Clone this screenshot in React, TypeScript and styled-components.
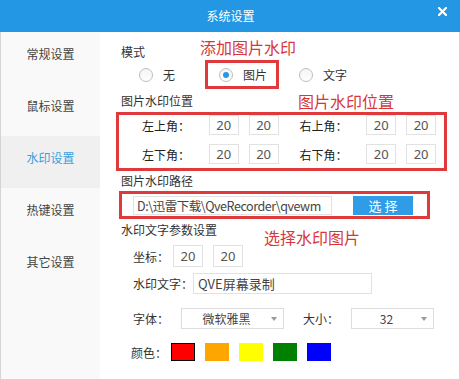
import React, { useState } from 'react';
import styled, { createGlobalStyle } from 'styled-components';

const GlobalStyle = createGlobalStyle`
  html, body {
    margin: 0;
    padding: 0;
    background: #fff;
  }
  body {
    font-family: "Noto Sans CJK SC", "Noto Sans", sans-serif;
    font-size: 12px;
    color: #333;
  }
  * {
    box-sizing: border-box;
  }
`;

const RED = '#e0393c';

const Window = styled.div`
  width: 460px;
  height: 380px;
  display: flex;
  flex-direction: column;
  background: #fff;
`;

const TitleBar = styled.div`
  height: 32px;
  flex: 0 0 32px;
  display: grid;
  grid-template-columns: 1fr auto 1fr;
  background: #2397e3;
  color: #fff;
`;

const Title = styled.div`
  grid-column: 2;
  line-height: 32px;
  font-size: 12px;
  padding-left: 1px;
`;

const CloseButton = styled.div`
  grid-column: 3;
  justify-self: end;
  align-self: start;
  width: 9px;
  height: 9px;
  margin: 7px 13px 0 0;
  display: flex;
`;

const Body = styled.div`
  flex: 1;
  display: flex;
  border: 1px solid #d4d4d4;
  border-top: none;
`;

const Sidebar = styled.div`
  width: 99px;
  flex: 0 0 99px;
  background: #f9f9f9;
  display: flex;
  flex-direction: column;
`;

const NavItem = styled.div<{ $active?: boolean }>`
  height: 52px;
  padding-top: 14px;
  line-height: 16px;
  text-align: center;
  font-size: 12px;
  color: ${(p) => (p.$active ? '#3a9fe0' : '#444')};
  background: ${(p) => (p.$active ? '#f0f0f0' : 'transparent')};
`;

const Main = styled.div`
  flex: 1;
  display: flex;
  flex-direction: column;
  background: #fff;
`;

const HeadRow = styled.div<{ $h: number; $align?: string }>`
  height: ${(p) => p.$h}px;
  flex: 0 0 ${(p) => p.$h}px;
  display: flex;
  align-items: ${(p) => p.$align || 'center'};
  padding-left: 21px;
`;

const SectionLabel = styled.div<{ $mt?: number; $mb?: number }>`
  line-height: 16px;
  font-size: 12px;
  color: #333;
  margin-top: ${(p) => p.$mt || 0}px;
  margin-bottom: ${(p) => p.$mb || 0}px;
  white-space: nowrap;
`;

const Note = styled.div<{ $ml: number; $mt?: number; $mb?: number }>`
  margin-left: ${(p) => p.$ml}px;
  margin-top: ${(p) => p.$mt || 0}px;
  margin-bottom: ${(p) => p.$mb || 0}px;
  line-height: 20px;
  font-size: 16px;
  color: #d8363b;
  white-space: nowrap;
`;

const RadioRow = styled.div`
  height: 29px;
  flex: 0 0 29px;
  display: flex;
  align-items: center;
  padding-left: 39px;
`;

const RadioOption = styled.label<{ $boxed?: boolean; $ml?: number }>`
  display: flex;
  align-items: center;
  gap: 10px;
  height: 29px;
  margin-left: ${(p) => p.$ml || 0}px;
  font-size: 12px;
  color: #333;
  ${(p) =>
    p.$boxed &&
    `
    border: 3px solid ${RED};
    padding: 0 9px 0 11px;
  `}
`;

const RadioCircle = styled.span<{ $checked?: boolean }>`
  width: 14px;
  height: 14px;
  border-radius: 50%;
  border: 1px solid #bdbdbd;
  background: linear-gradient(#f4f4f4, #fff);
  display: flex;
  align-items: center;
  justify-content: center;
  &::after {
    content: '';
    width: 6px;
    height: 6px;
    border-radius: 50%;
    background: ${(p) => (p.$checked ? '#2a96e4' : 'transparent')};
  }
`;

const RedBox = styled.div<{ $ml: number; $w: number; $h: number }>`
  margin-left: ${(p) => p.$ml}px;
  width: ${(p) => p.$w}px;
  height: ${(p) => p.$h}px;
  flex: 0 0 ${(p) => p.$h}px;
  border: 3px solid ${RED};
`;

const CornerBox = styled(RedBox)`
  display: flex;
  flex-direction: column;
  gap: 9px;
  padding: 0 8px 0 23px;
`;

const CornerRow = styled.div`
  height: 20px;
  display: flex;
  align-items: center;
`;

const CornerLabel = styled.div<{ $ml?: number }>`
  width: 67px;
  margin-left: ${(p) => p.$ml || 0}px;
  font-size: 12px;
  color: #222;
  white-space: nowrap;
`;

const NumBox = styled.div<{ $h?: number; $ml?: number }>`
  width: 30px;
  height: ${(p) => p.$h || 20}px;
  margin-left: ${(p) => p.$ml || 0}px;
  border: 1px solid #e2e2e2;
  display: flex;
  align-items: center;
  justify-content: center;
  font-family: "Noto Sans", "Noto Sans CJK SC", sans-serif;
  font-size: 13px;
  color: #555;
`;

const PathBox = styled(RedBox)`
  display: flex;
  align-items: center;
  padding-left: 11px;
`;

const PathInput = styled.div`
  width: 199px;
  height: 19px;
  border: 1px solid #e2e2e2;
  padding-left: 3px;
  overflow: hidden;
  white-space: nowrap;
  line-height: 17px;
  font-size: 12.5px;
  color: #444;
  letter-spacing: -0.45px;
`;

const PickButton = styled.div`
  width: 60px;
  height: 19px;
  margin-left: 21px;
  background: #2e9ce6;
  color: #fff;
  font-size: 13px;
  line-height: 19px;
  text-align: center;
  letter-spacing: 3px;
  padding-left: 3px;
`;

const FieldRow = styled.div<{ $mt: number; $h: number; $pl?: number }>`
  margin-top: ${(p) => p.$mt}px;
  height: ${(p) => p.$h}px;
  flex: 0 0 ${(p) => p.$h}px;
  display: flex;
  align-items: center;
  padding-left: ${(p) => p.$pl ?? 33}px;
`;

const FieldLabel = styled.div<{ $w: number; $ml?: number }>`
  width: ${(p) => p.$w}px;
  flex: 0 0 ${(p) => p.$w}px;
  margin-left: ${(p) => p.$ml || 0}px;
  font-size: 12px;
  color: #333;
  white-space: nowrap;
`;

const TextInput = styled.div`
  width: 179px;
  height: 21px;
  border: 1px solid #e2e2e2;
  padding-left: 4px;
  line-height: 19px;
  font-size: 13px;
  color: #444;
`;

const Select = styled.div<{ $w: number }>`
  width: ${(p) => p.$w}px;
  height: 21px;
  border: 1px solid #dddddd;
  display: flex;
  align-items: center;
  padding-right: 6px;
  font-size: 12px;
  color: #444;
`;

const SelectValue = styled.div`
  flex: 1;
  text-align: center;
`;

const Caret = styled.span`
  width: 0;
  height: 0;
  border-left: 3px solid transparent;
  border-right: 3px solid transparent;
  border-top: 4px solid #9a9a9a;
  margin-top: 1px;
`;

const Swatch = styled.div<{ $color: string; $selected?: boolean }>`
  width: 24px;
  height: 18px;
  margin-right: 10px;
  background: ${(p) => p.$color};
  border: ${(p) => (p.$selected ? '1px solid #000' : 'none')};
`;

const navItems = ['常规设置', '鼠标设置', '水印设置', '热键设置', '其它设置'];
const swatches = ['#ff0000', '#ffa500', '#ffff00', '#008000', '#0000ff'];

const App = () => {
  const [mode, setMode] = useState('image');
  const [color, setColor] = useState('#ff0000');

  return (
    <Window>
      <GlobalStyle />
      <TitleBar>
        <Title>系统设置</Title>
        <CloseButton>
          <svg width="9" height="9" viewBox="0 0 9 9">
            <path d="M1 1 L8 8 M8 1 L1 8" stroke="#fff" strokeWidth="2.2" strokeLinecap="square" />
          </svg>
        </CloseButton>
      </TitleBar>
      <Body>
        <Sidebar>
          {navItems.map((name) => (
            <NavItem key={name} $active={name === '水印设置'}>
              {name}
            </NavItem>
          ))}
        </Sidebar>
        <Main>
          <HeadRow $h={28} $align="flex-end">
            <SectionLabel>模式</SectionLabel>
            <Note $ml={55} $mb={3}>添加图片水印</Note>
          </HeadRow>
          <RadioRow>
            <RadioOption onClick={() => setMode('none')}>
              <RadioCircle $checked={mode === 'none'} />无
            </RadioOption>
            <RadioOption $boxed $ml={30} onClick={() => setMode('image')}>
              <RadioCircle $checked={mode === 'image'} />图片
            </RadioOption>
            <RadioOption $ml={20} onClick={() => setMode('text')}>
              <RadioCircle $checked={mode === 'text'} />文字
            </RadioOption>
          </RadioRow>
          <HeadRow $h={23}>
            <SectionLabel>图片水印位置</SectionLabel>
            <Note $ml={105}>图片水印位置</Note>
          </HeadRow>
          <CornerBox $ml={16} $w={331} $h={59}>
            <CornerRow>
              <CornerLabel>左上角：</CornerLabel>
              <NumBox>20</NumBox>
              <NumBox $ml={10}>20</NumBox>
              <CornerLabel $ml={21}>右上角：</CornerLabel>
              <NumBox>20</NumBox>
              <NumBox $ml={10}>20</NumBox>
            </CornerRow>
            <CornerRow>
              <CornerLabel>左下角：</CornerLabel>
              <NumBox>20</NumBox>
              <NumBox $ml={10}>20</NumBox>
              <CornerLabel $ml={21}>右下角：</CornerLabel>
              <NumBox>20</NumBox>
              <NumBox $ml={10}>20</NumBox>
            </CornerRow>
          </CornerBox>
          <HeadRow $h={20}>
            <SectionLabel>图片水印路径</SectionLabel>
          </HeadRow>
          <PathBox $ml={19} $w={311} $h={28}>
            <PathInput>D:\迅雷下载\QveRecorder\qvewm</PathInput>
            <PickButton>选择</PickButton>
          </PathBox>
          <HeadRow $h={22} $align="flex-start">
            <SectionLabel $mt={3}>水印文字参数设置</SectionLabel>
            <Note $ml={47} $mt={8}>选择水印图片</Note>
          </HeadRow>
          <FieldRow $mt={4} $h={22}>
            <FieldLabel $w={40}>坐标：</FieldLabel>
            <NumBox $h={22}>20</NumBox>
            <NumBox $h={22} $ml={10}>20</NumBox>
          </FieldRow>
          <FieldRow $mt={6} $h={21}>
            <FieldLabel $w={60}>水印文字：</FieldLabel>
            <TextInput>QVE屏幕录制</TextInput>
          </FieldRow>
          <FieldRow $mt={14} $h={21}>
            <FieldLabel $w={48}>字体：</FieldLabel>
            <Select $w={103}>
              <SelectValue>微软雅黑</SelectValue>
              <Caret />
            </Select>
            <FieldLabel $w={48} $ml={19}>大小：</FieldLabel>
            <Select $w={83}>
              <SelectValue>32</SelectValue>
              <Caret />
            </Select>
          </FieldRow>
          <FieldRow $mt={14} $h={18} $pl={31}>
            <FieldLabel $w={40}>颜色：</FieldLabel>
            {swatches.map((c) => (
              <Swatch key={c} $color={c} $selected={c === color} onClick={() => setColor(c)} />
            ))}
          </FieldRow>
        </Main>
      </Body>
    </Window>
  );
};

export default App;
